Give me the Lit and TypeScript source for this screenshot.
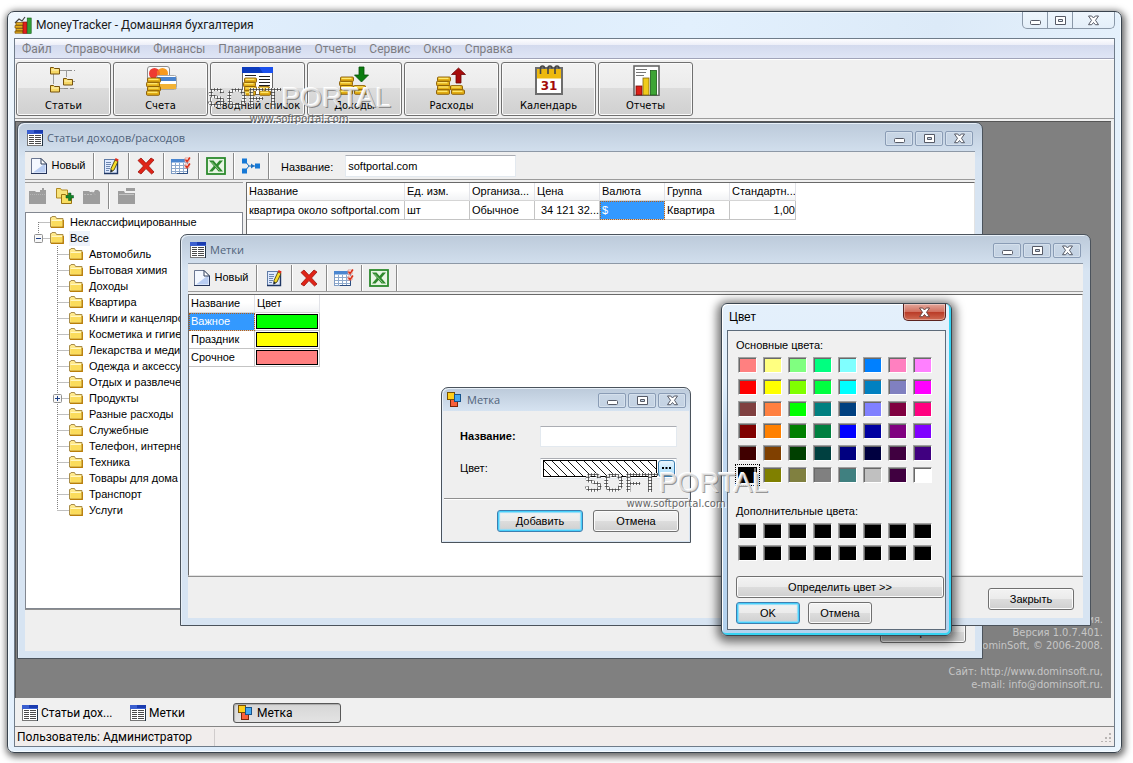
import { LitElement, html, svg, css, nothing, TemplateResult } from "lit";
import { customElement, property } from "lit/decorators.js";
import { styleMap } from "lit/directives/style-map.js";
import { classMap } from "lit/directives/class-map.js";

/* ---------- icons ---------- */

const icon = (w: number, h: number, body: unknown) =>
  html`<svg width=${w} height=${h} viewBox="0 0 ${w} ${h}" aria-hidden="true" style="display:block;flex:none">${body}</svg>`;

const coin = (x: number, y: number, w = 13) => svg`
  <rect x=${x + 0.5} y=${y} width=${w} height="4.4" rx="1" fill="#e2ad14" stroke="#855804" stroke-width=".9"/>
  <path d="M${x + 1.5} ${y + 1.4} h${w - 3}" stroke="#ffe970" stroke-width="1.3"/>`;

const coins = (x: number, y: number) => svg`
  ${coin(x + 1, y)}${coin(x, y + 4.3)}${coin(x + 1, y + 8.6)}${coin(x, y + 12.9)}
  ${coin(x + 14, y + 8.6, 12)}${coin(x + 15, y + 12.9, 13)}`;

const bigFolder = (x: number, y: number) => svg`
  <path d="M${x + 0.5} ${y + 0.5} h3 l1 1 h5 v5.500 h-9 z" fill="#f6d764" stroke="#77520c"/>
  <path d="M${x + 1.5} ${y + 3} h7" stroke="#fff6c0"/>`;

const icons = {
  app: () => icon(18, 18, svg`
    <path d="M1 7 L5 3 L8 5 L11 1" fill="none" stroke="#444" stroke-width="1.2"/>
    <path d="M2 6.5 h8 v2.6 h-8z M1 9.5 h8 v2.6 h-8z M2 12.5 h8 v2.4 h-8z M1 15 h8 v2.2 h-8z" fill="#e3ad1e" stroke="#7a5206" stroke-width=".7"/>
    <rect x="9" y="6" width="4" height="11.5" fill="#e0201c" stroke="#7c0a08" stroke-width=".6"/>
    <rect x="13.2" y="2" width="4" height="15.5" fill="#33a136" stroke="#125816" stroke-width=".6"/>`),
  articles: () => icon(32, 32, svg`
    <path d="M5.5 10 V20 M12 6.5 H20 M18.500 7 V13 M22 17.500 H27 M12 24.500 H16" fill="none" stroke="#9b9b9b"/>
    <path d="M20 6.5 H27 M16 24.500 H27" stroke="#8d8d8d" stroke-dasharray="4 2"/>
    ${bigFolder(2, 3)}${bigFolder(15, 14)}${bigFolder(2, 21)}`),
  accounts: () => icon(32, 32, svg`
    <rect x="2.5" y="2.5" width="22" height="15" rx="2.5" fill="#fafafa" stroke="#8c8c8c"/>
    <circle cx="9.5" cy="9.500" r="5.5" fill="#ee3b32"/><circle cx="17.5" cy="9.500" r="5.5" fill="#f89a1d"/>
    <path d="M13.5 5.8 a5.5 5.5 0 0 1 0 7.4 a5.5 5.5 0 0 1 0 -7.4" fill="#f26a2a"/>
    <rect x="11.5" y="11.500" width="20" height="14" rx="2" fill="#fff" stroke="#a9a9a9"/>
    <rect x="12" y="13" width="19" height="4" fill="#4a83cc"/><rect x="12" y="20" width="19" height="5" fill="#f2b234"/>
    ${coin(2, 14)}${coin(1, 18.3)}${coin(2, 22.6)}${coin(1, 26.9)}`),
  summary: () => icon(32, 32, svg`
    <rect x=".5" y="3.500" width="30" height="27" fill="#fff" stroke="#666"/>
    <rect x="0" y="3" width="31" height="6" fill="#0c3bbd"/><path d="M17 3 h14 v6 h-10z" fill="#1a50ee"/>
    <path d="M3 11.500 H14 M3 14.500 H12 M17 12.500 H28 M17 15.500 H28 M17 18.500 H28 M17 21.500 H28" stroke="#222"/>
    ${coin(2, 14, 12)}${coin(1, 18.3, 12)}${coin(2, 22.6, 12)}${coin(1, 26.9, 12)}${coin(16, 22.6, 11)}${coin(17, 26.9, 11)}`),
  income: () => icon(32, 32, svg`${coins(0, 13)}
    <path d="M20 3 h5 v8 h4.500 l-7 7 l-7 -7 h4.500z" fill="#0b7c10" stroke="#055208" stroke-width=".8"/>`),
  expense: () => icon(32, 32, svg`${coins(0, 13)}
    <path d="M20 19 v-8.500 h-4.500 l7 -6.500 l7 6.500 h-4.500 v8.500z" fill="#a80c0c" stroke="#6d0606" stroke-width=".8"/>`),
  calendar: () => icon(32, 32, svg`
    <rect x="3" y="4" width="26" height="26" fill="#fff" stroke="#6d6d6d" stroke-width="2"/>
    <rect x="4" y="5" width="24" height="9.500" fill="#edb90e"/>
    <text x="16" y="26" text-anchor="middle" font-family="DejaVu Sans, sans-serif" font-weight="700" font-size="12" fill="#a40a0a">31</text>
    <path d="M7.500 10 V4.500 q0-2.500 2-2.500 t2 2.500 M15 10 V4.500 q0-2.500 2-2.500 t2 2.500 M22 10 V4.500 q0-2.500 2-2.500 t2 2.500" fill="none" stroke="#454545" stroke-width="1.600"/>`),
  reports: () => icon(32, 32, svg`
    <rect x="4" y="2" width="25" height="29.500" fill="#fff" stroke="#666" stroke-width="1.600"/>
    <path d="M6 5.500 H17 M6 8.500 H16 M6 11.500 H14" stroke="#777"/>
    <rect x="6" y="22" width="6" height="9" fill="#dd1f16" stroke="#760d08" stroke-width=".8"/>
    <rect x="13" y="14" width="6" height="17" fill="#f0cb1a" stroke="#85670a" stroke-width=".8"/>
    <rect x="20.500" y="6.500" width="6" height="24.500" fill="#3ea535" stroke="#1c5e18" stroke-width=".8"/>`),
  list: () => icon(16, 16, svg`
    <path d="M0 0 h15 v15 h-15z" fill="#fff"/><path d="M.5 0 V15 M0 15.500 H15" stroke="#777"/><path d="M15.500 2 V16" fill="none" stroke="#234"/>
    <rect width="16" height="4" fill="#3a5fd0"/><path d="M7 0 h9 v3 h-9z" fill="#1a3cb0"/>
    <path d="M2 5.500 H7 M2 7.500 H7 M2 9.500 H7 M2 11.500 H7 M2 13.500 H7 M8 5.500 H14 M8 7.500 H14 M8 9.500 H14 M8 11.500 H14 M8 13.500 H14" stroke="#4a4a4a"/>`),
  tag: () => icon(16, 16, svg`
    <rect x="3.500" y="7.500" width="7" height="7" fill="#f9603a" stroke="#7b2507"/>
    <rect x=".5" y=".5" width="7" height="7" fill="#ffcf1a" stroke="#7a5300"/>
    <rect x="7.500" y="2.500" width="6" height="7" fill="#45a9ef" stroke="#17538c"/>`),
  create: () => icon(18, 18, svg`
    <path d="M1.500 1.500 H11 L16.500 7 V16.500 H1.500z" fill="#f4f8ff" stroke="#6a7691"/>
    <path d="M3 15.500 L15.500 6 V15.500z" fill="#b9cdf2"/><path d="M11 1.500 V7 H16.500z" fill="#fff" stroke="#33415c"/>
    <path d="M1 16.500 H17 M16.500 7 V17" stroke="#26355a"/>`),
  edit: () => icon(18, 18, svg`
    <rect x="2.500" y="2.500" width="13" height="14" fill="#dfeaff" stroke="#5f7ba6"/><path d="M2 16.500 H15.500 V5" fill="none" stroke="#1f3764" stroke-width="1.400"/>
    <path d="M4 5.500 H9 M4 7.500 H9 M4 9.500 H8 M4 11.500 H8 M4 13.500 H7" stroke="#6d87b0"/>
    <path d="M9 11.500 L13 3 L16 4.500 L12 13 L9 15z" fill="#f7dc28" stroke="#4c4412" stroke-width=".9"/>
    <path d="M12.800 3 l.8 -2 l3 1.500 l-.6 2z" fill="#e02d1c"/><path d="M8.700 12.500 l-.4 3.200 l2.700 -2z" fill="#1e2b3e"/>`),
  remove: () => icon(18, 18, svg`
    <path d="M1 3.500 L4 1 L9 6.300 L14 1 L17 3 L11.500 9 L17 15 L14.500 17 L9 11.600 L4 17 L1 15 L6.500 9z" fill="#e02418" stroke="#9c130b" stroke-width=".8"/>`),
  columns: () => icon(20, 18, svg`
    <rect x=".5" y="2.500" width="16" height="14" fill="#fff" stroke="#7f9cc4"/><rect x="0" y="2" width="17" height="3.500" fill="#4a86d0"/>
    <path d="M4.500 6 V17 M8.500 6 V17 M12.500 6 V17 M1 8.500 H16 M1 11.500 H16 M1 14.500 H16" stroke="#8ea9cc"/>
    <path d="M16.500 8 V16.500 H6" fill="none" stroke="#2c4d80"/>
    <path d="M14 1 h4 v4 h-4z M14 7 h4 v4 h-4z" fill="#fff" stroke="#d88c80" stroke-width=".8"/>
    <path d="M14.500 2.500 l1.500 2 l3 -4 M14.500 8.500 l1.500 2 l3 -4" fill="none" stroke="#dc2e16" stroke-width="1.500"/>`),
  excel: () => icon(20, 18, svg`
    <rect x="1" y="1" width="18" height="16" fill="#e8f5e4" stroke="#2c8a2d" stroke-width="1.800"/>
    <path d="M3 3.500 H7.500 L10.500 7 L13.500 3.500 H17 L12.300 9 L17 14.500 H12.500 L9.700 11 L6.500 14.500 H3 L7.800 9z" fill="#2f8a2d"/>
    <path d="M5.500 5 L13.500 13.500" stroke="#8fc98a"/>`),
  tree: () => icon(20, 18, svg`
    <path d="M4 4 L8 9 L4 14 M8 9 H16" fill="none" stroke="#1b6fbf"/><path d="M10 6.500 l3.500 2.500 l-3.500 2.500z" fill="#1b6fbf"/>
    <rect x="1" y="1.500" width="5" height="5" fill="#1779d6"/><rect x="1" y="11.500" width="5" height="5" fill="#1779d6"/>
    <rect x="14" y="6.500" width="5" height="5" fill="#1779d6"/>`),
  folderGrey: () => icon(18, 18, svg`<path d="M0 4 h6 l1 1 h4 v-2 h2 v-2 h2 v2 h2 v14 h-17z" fill="#9d9d9d"/><path d="M1 7.500 H16" stroke="#b4b4b4" stroke-dasharray="1 1"/>`),
  folderGreyOpen: () => icon(18, 18, svg`<path d="M0 4 h6 l1 1 h4 l1 -2 h3 l2 2 v12 h-17z" fill="#9d9d9d"/><path d="M9 4.500 l3 3 M1 7.500 H10" stroke="#bcbcbc" stroke-dasharray="2 1"/>`),
  folderGreyFlat: () => icon(18, 18, svg`<path d="M0 4 h6 l1 2 h10 v11 h-17z M8 1 h9 v3 h-9z" fill="#9d9d9d"/><path d="M1 7.500 H16" stroke="#c4c4c4"/>`),
  folderAdd: () => icon(18, 18, svg`
    <path d="M.5 1.500 h4 l1 1.500 h6 v8 h-11z" fill="#f8e37a" stroke="#b08a22"/>
    <path d="M5.500 7.500 h4 l1 1.500 h5 v7.500 h-10z" fill="#f8de62" stroke="#9a7412"/>
    <path d="M12.500 6 h2.500 v2.500 h2.500 v2.500 h-2.500 v2.500 h-2.500 v-2.500 h-2.500 v-2.500 h2.500z" fill="#13842a" stroke="#06501a" stroke-width=".5"/>`),
  folder: () => icon(14, 12, svg`
    <path d="M.5 11 V1.500 h1 l.5 -1 h3.500 l1 2 h6.500 V11z" fill="#ffe98c" stroke="#a98d4a"/>
    <path d="M1.500 4 H12.500 V10.500 H1.500z" fill="#fbdc5c"/><path d="M1.500 4.500 H12" stroke="#fff7c4"/>
    <path d="M1 11.300 H13.300 V4" fill="none" stroke="#b97e0a" stroke-width="1.300"/>`),
};

type IconName = keyof typeof icons;

/* ---------- shared look ---------- */

const controls = css`
  * { box-sizing: border-box; }
  button, input { font: inherit; color: inherit; margin: 0; }
  button { padding: 0; cursor: default; }
  .push {
    height: 22px;
    border: 1px solid #707070;
    border-radius: 3px;
    background: linear-gradient(#f3f3f3, #ebebeb 50%, #dddddd 50%, #cfcfcf);
    box-shadow: inset 0 0 0 1px #fbfbfb;
  }
  .push.default { border-color: #3c7fb1; box-shadow: inset 0 0 0 1px #48d0fb, inset 0 0 1px 2px #8fdcf8; }
`;

@customElement("caption-buttons")
class CaptionButtons extends LitElement {
  static styles = css`
    :host { display: flex; gap: 2px; }
    button {
      display: grid; place-items: center; padding: 0;
      width: 28px; height: 15px;
      border: 1px solid #8a9cb5; border-radius: 2px;
      background: linear-gradient(#c9d6e5, #c3d2e3);
      box-shadow: inset 0 0 0 1px #d5e0ec;
    }
    :host([main]) { gap: 0; }
    :host([main]) button {
      height: 17px; width: 26px; margin-left: -1px;
      border-color: #8a98a8; border-top: 0; border-radius: 0;
      background: linear-gradient(#eef6fd, #e4eff9); box-shadow: none;
    }
    :host([main]) button:first-child { border-bottom-left-radius: 5px; }
    :host([main]) button:last-child { width: 43px; border-bottom-right-radius: 5px; }
  `;
  render() {
    return html`
      <button aria-label="Свернуть">${icon(13, 11, svg`<rect x="1.500" y="5.500" width="10" height="4" rx="1" fill="#fff" stroke="#565a66"/>`)}</button>
      <button aria-label="Развернуть">${icon(13, 11, svg`<path d="M1.500 1.500 h10 v8 h-10z M4.500 4.500 h4 v2 h-4z" fill="#fff" fill-rule="evenodd" stroke="#565a66"/>`)}</button>
      <button aria-label="Закрыть">${icon(13, 11, svg`<path d="M1.500 1 H4.700 L6.500 3 L8.300 1 H11.500 L8.500 5.300 L11.500 9.700 H8.300 L6.500 7.500 L4.700 9.700 H1.500 L4.500 5.300z" fill="#fff" stroke="#565a66"/>`)}</button>`;
  }
}

@customElement("mdi-window")
class MdiWindow extends LitElement {
  @property() heading = "";
  @property() glyph: IconName = "list";

  static styles = css`
    * { box-sizing: border-box; }
    :host {
      box-sizing: border-box;
      display: flex; flex-direction: column;
      border: 1px solid #4b535c;
      border-radius: 7px 7px 0 0;
      background: linear-gradient(#bccada, #d7e4f2 36px);
      box-shadow: inset 1px 1px 0 #e8f0f8;
      padding: 0 7px 7px;
      overflow: hidden;
    }
    :host([compact]) { padding: 0 1px 1px; background: linear-gradient(#bccada, #d7e4f2 24px); }
    header {
      display: flex; align-items: center; flex: none;
      height: 28px; padding: 2px 2px 0 2px; gap: 4px;
      font: 11px/16px "Open Sans", "Noto Sans", sans-serif; color: #50637a;
    }
    :host([compact]) header { height: 23px; padding: 1px 3px 0 4px; }
    h2 { flex: 1; margin: 0; font: inherit; }
    .body { flex: 1; min-height: 0; display: flex; flex-direction: column; background: #efefef; border-top: 1px solid #8d98a6; }
    :host([compact]) .body { border-top: 0; }
  `;
  render() {
    return html`
      <header>${icons[this.glyph]()}<h2>${this.heading}</h2><caption-buttons></caption-buttons></header>
      <div class="body"><slot></slot></div>`;
  }
}

@customElement("color-dialog")
class ColorDialog extends LitElement {
  basic = (
    "ff8080 ffff80 80ff80 00ff80 80ffff 0080ff ff80c0 ff80ff " +
    "ff0000 ffff00 80ff00 00ff40 00ffff 0080c0 8080c0 ff00ff " +
    "804040 ff8040 00ff00 008080 004080 8080ff 800040 ff0080 " +
    "800000 ff8000 008000 008040 0000ff 0000a0 800080 8000ff " +
    "400000 804000 004000 004040 000080 000040 400040 400080 " +
    "000000 808000 808040 808080 408080 c0c0c0 400040 ffffff"
  ).split(" ");
  custom: string[] = Array(16).fill("000000");

  static styles = [controls, css`
    :host {
      box-sizing: border-box; display: flex; flex-direction: column;
      border: 1px solid #3c4650; border-radius: 6px;
      padding: 0 5px 5px 5px;
      background: linear-gradient(#e4f0fb, #e0eefb 80px, #c3daf2 130px, #b4d2ee);
      box-shadow: inset -1px -1px 0 1px #35d3f2, inset 1px 1px 0 #fff, 0 2px 10px 4px rgba(0, 0, 0, .55);
      font: 11px/13px "Liberation Sans", Arial, sans-serif; color: #000;
    }
    header { display: flex; justify-content: space-between; height: 26px; padding: 0 0 0 2px; }
    h2 { margin: 0; padding-top: 7px; font: 12px/13px "Liberation Sans", Arial, sans-serif; }
    .close {
      display: grid; place-items: center; width: 43px; height: 17px;
      border: 1px solid #5b2320; border-top: 0; border-radius: 0 0 5px 5px;
      background: linear-gradient(#e4a79b, #d1705f 48%, #b93a26 50%, #cf6a52);
      box-shadow: inset 0 0 0 1px rgba(255, 255, 255, .35);
    }
    .body { flex: 1; display: flex; flex-direction: column; border: 1px solid #5d6b7a; background: #f0f0f0; padding: 8px 1px 5px 8px; }
    h3 { margin: 0; font: inherit; }
    .grid { display: grid; grid-template-columns: repeat(8, 19px); gap: 6px; padding: 5px 0 0 2px; }
    .cell {
      width: 19px; height: 16px;
      border: 1px solid; border-color: #a0a0a0 #fff #fff #a0a0a0;
      box-shadow: inset 1px 1px 0 #696969;
    }
    .cell.on { border-color: #000; outline: 1px dotted #000; outline-offset: 2px; box-shadow: inset -2px 0 0 #777; }
    .second { padding-top: 22px; }
    .wide { margin-top: 15px; }
    .row { display: flex; gap: 8px; margin-top: 4px; }
    .row button { width: 64px; }
  `];

  cells(list: string[], selected = -1) {
    return html`<div class="grid">${list.map((c, i) => html`
      <button class=${classMap({ cell: true, on: i === selected })} aria-label="#${c}" style=${styleMap({ background: "#" + c })}></button>`)}</div>`;
  }

  render() {
    return html`
      <header>
        <h2>Цвет</h2>
        <button class="close" aria-label="Закрыть">${icon(13, 11, svg`<path d="M1.500 1 H4.700 L6.500 3 L8.300 1 H11.500 L8.500 5.300 L11.500 9.700 H8.300 L6.500 7.500 L4.700 9.700 H1.500 L4.500 5.300z" fill="#fff" stroke="#6a4440"/>`)}</button>
      </header>
      <div class="body">
        <h3>Основные цвета:</h3>
        ${this.cells(this.basic, 40)}
        <h3 class="second">Дополнительные цвета:</h3>
        ${this.cells(this.custom)}
        <button class="push wide">Определить цвет &gt;&gt;</button>
        <div class="row"><button class="push default">OK</button><button class="push">Отмена</button></div>
      </div>`;
  }
}

/* ---------- application ---------- */

@customElement("app-root")
class AppRoot extends LitElement {
  menu = ["Файл", "Справочники", "Финансы", "Планирование", "Отчеты", "Сервис", "Окно", "Справка"];

  tools: [IconName, string][] = [
    ["articles", "Статьи"], ["accounts", "Счета"], ["summary", "Сводный список"], ["income", "Доходы"],
    ["expense", "Расходы"], ["calendar", "Календарь"], ["reports", "Отчеты"],
  ];

  groups = [
    "Автомобиль", "Бытовая химия", "Доходы", "Квартира", "Книги и канцелярские товары", "Косметика и гигиена",
    "Лекарства и медицина", "Одежда и аксессуары", "Отдых и развлечения", "Продукты", "Разные расходы",
    "Служебные", "Телефон, интернет", "Техника", "Товары для дома", "Транспорт", "Услуги",
  ];

  columns: [string, number][] = [
    ["Название", 158], ["Ед. изм.", 65], ["Организа...", 65], ["Цена", 65], ["Валюта", 65], ["Группа", 65], ["Стандартн...", 66],
  ];

  labels: [string, string][] = [["Важное", "#00ff00"], ["Праздник", "#ffff00"], ["Срочное", "#ff8080"]];

  static styles = [controls, css`
    :host {
      position: relative;
      display: flex;
      min-height: 100vh;
      box-sizing: border-box;
      padding: 11px 11px 10px 7px;
      background: #fff;
      --sans: "Liberation Sans", Arial, sans-serif;
      --ui: Roboto, "Noto Sans", sans-serif;
      font: 11px/13px var(--sans);
      color: #000;
      overflow: hidden;
    }
    h1, ul, p { margin: 0; padding: 0; list-style: none; }

    .main {
      flex: 1; min-width: 0; display: flex; flex-direction: column;
      border: 1px solid #39434d; border-radius: 7px; padding: 0 6px 5px;
      background: linear-gradient(100deg, #eef6fd, #e3f0fd 12%, #dcebfa 30%, #e2f0fd 55%, #dceaf8 75%, #eaf5fe);
      box-shadow: inset 0 0 0 1px #f5fbff, 1px 2px 7px 2px rgba(0, 0, 0, .6);
    }
    .title { display: flex; gap: 4px; height: 26px; }
    .title svg { margin-top: 4px; }
    .title h1 { flex: 1; padding-top: 5px; font: 12px/17px var(--ui); color: #1a1a1a; }
    .client { flex: 1; display: flex; flex-direction: column; border: 1px solid #6f7c8a; background: #f0f0f0; }

    .menu { display: flex; gap: 13px; height: 20px; padding: 0 7px; border-bottom: 1px solid #a0a3b8; background: linear-gradient(#fdfdff, #edeff8 30%, #d3daee 32%, #dfe5f5); }
    .menu button { border: 0; background: none; font: 12px/18px var(--ui); color: #7d7d82; }
    .tools { display: flex; gap: 2px; padding: 2px 1px 3px; border-top: 1px solid #fff; border-bottom: 1px solid #9b9b9b; height: 60px; }
    .tools button {
      display: flex; flex-direction: column; align-items: center; gap: 3px; padding-top: 1px;
      width: 95px; height: 54px;
      border: 1px solid #707070; border-radius: 3px;
      background: linear-gradient(#f2f2f2, #ebebeb 48%, #dcdcdc 49%, #d0d0d0);
      box-shadow: inset 0 0 0 1px #fafafa;
      font: 11px/13px "DejaVu Sans Condensed", Verdana, sans-serif; white-space: nowrap;
    }

    .desk { position: relative; flex: 1; margin: 2px 3px 0 0; border: 1px solid #565656; border-width: 1px 0 0 1px; background: #808080; overflow: hidden; }
    .credits { position: absolute; right: 8px; bottom: 7px; text-align: right; color: #c6c6c6; font: 11px/13px "DejaVu Sans Condensed", sans-serif; }
    .credits .gap { padding-top: 13px; }
    .w-items { position: absolute; left: 1px; top: 0; width: 966px; height: 537px; }
    .w-tags { position: absolute; left: 164px; top: 112px; width: 911px; height: 392px; }
    .w-tag { position: absolute; left: 425px; top: 265px; width: 250px; height: 156px; }
    .w-color { position: absolute; left: 705px; top: 181px; width: 231px; height: 333px; }

    .bar { display: flex; align-items: center; height: 28px; border-bottom: 1px solid #9b9b9b; }
    .bar button { display: flex; align-items: center; justify-content: center; width: 33px; height: 26px; padding-right: 2px; border: 0; background: none; }
    .bar .new { width: 68px; gap: 4px; padding-right: 3px; }
    .sep { width: 2px; height: 26px; border-left: 1px solid #8a8a8a; border-right: 1px solid #fff; }
    .bar label { padding: 3px 12px 0 11px; }
    .bar input { width: 171px; height: 22px; }
    .text { border: 1px solid #e3e9ef; border-top-color: #abadb3; background: #fff; padding: 0 2px; outline: 0; }

    .split { flex: 1; display: flex; gap: 3px; min-height: 0; padding-top: 2px; }
    .left { width: 218px; display: flex; flex-direction: column; border-top: 1px solid #9b9b9b; }
    .left .bar { height: 29px; border: 0; padding: 0 0 3px 4px; }
    .left .bar button { width: 27px; justify-content: flex-start; }
    .left .sep { margin: 0 8px 0 -2px; }
    .tree { flex: 1; border: 1px solid #828790; background: #fff; padding-top: 1px; overflow: hidden; white-space: nowrap; }
    .tree li { display: flex; align-items: center; height: 16px; padding-left: 6px; }
    .tree li.sub { padding-left: 24px; }
    .tree li span { margin-left: 5px; padding: 0 1px; line-height: 15px; }
    .tree .cur { background: #eef2fa; }
    .sheet { flex: 1; min-width: 0; border: 1px solid; border-color: #696969 #e3e3e3 #e3e3e3 #696969; background: #fff; }
    .foot { display: flex; justify-content: flex-end; align-items: center; height: 42px; padding: 3px 9px 0 0; border-top: 1px solid #8f8f8f; }
    .foot .push { width: 86px; }

    table { border-collapse: separate; border-spacing: 0; table-layout: fixed; }
    th { height: 18px; padding: 0 2px; font-weight: 400; text-align: left; white-space: nowrap; overflow: hidden; border-right: 1px solid #e2e3e8; border-bottom: 1px solid #d5d5d5; background: linear-gradient(#fff 45%, #f2f3f5); }
    td { height: 19px; padding: 0 2px; white-space: nowrap; overflow: hidden; border-right: 1px solid #c4c4c4; border-bottom: 1px solid #c4c4c4; }
    .tags td { height: 18px; }
    .num { text-align: right; padding: 0; }
    td.sel { color: #fff; background: #3399ff; outline: 1px dotted #b35f1a; outline-offset: -1px; }
    td.chip { padding: 1px; }
    .chip div { height: 15px; border: 1px solid #000; }

    .form { flex: 1; display: grid; grid-template-columns: 80px 137px; grid-auto-rows: 21px; row-gap: 11px; align-content: start; align-items: center; padding: 15px 0 0 17px; }
    .form .strong { font-weight: 700; }
    .form input { width: 100%; height: 21px; }
    .pick { display: flex; gap: 1px; height: 21px; padding: 1px 1px 1px 2px; border: 1px solid #e3e9ef; border-top-color: #abadb3; background: #fff; }
    .hatch { flex: 1; height: 17px; border: 1px solid #000; background: #fff; }
    .hatch svg { width: 100%; height: 100%; display: block; }
    .more { width: 17px; height: 17px; display: grid; place-items: center; border: 1px solid #3c7fb1; border-radius: 3px; background: linear-gradient(#eaf6fd, #bee6fd 60%, #a7d9f5); }
    .actions { display: flex; justify-content: flex-end; gap: 10px; height: 43px; padding: 11px 9px 0; margin: 0 1px; border-top: 1px solid #8f8f8f; box-shadow: inset 0 1px 0 #fff; }
    .actions .push { width: 86px; }

    .tasks { display: flex; height: 28px; padding: 5px 2px 3px; font: 12px/14px var(--ui); }
    .tasks button { display: flex; align-items: center; gap: 3px; width: 108px; height: 20px; padding-left: 4px; border: 1px solid transparent; background: none; border-radius: 3px; }
    .tasks .on { border-color: #585858; background: linear-gradient(#d6d6d6, #e3e3e3); box-shadow: inset 1px 1px 1px #aaa; }
    .status { display: flex; align-items: center; justify-content: space-between; height: 20px; padding: 1px 3px 0 2px; border-top: 1px solid #858585; background: #f1edec; font: 12px/17px var(--ui); }
    .status p { width: 198px; border-right: 1px solid #d0cccc; }

    .mark { position: absolute; display: grid; justify-items: center; pointer-events: none; font: 28px/26px var(--sans); }
    .mark.a { left: 207px; top: 85px; }
    .mark.b { left: 584px; top: 470px; }
    .mark .soft { font-weight: 700; color: transparent; background: radial-gradient(circle, #444 45%, rgba(255, 255, 255, .8) 55%) 0 0 / 3px 3px; -webkit-background-clip: text; background-clip: text; }
    .mark .portal { color: rgba(235, 235, 235, .8); text-shadow: 1px 1px 0 rgba(90, 90, 90, .6), -1px -1px 0 #fff; }
    .mark small { font: 10px/15px "DejaVu Sans", sans-serif; color: #666; text-shadow: 1px 1px 0 #fff; }
  `];

  guide(level: number, first: boolean, last: boolean, box?: "+" | "-") {
    const x = level ? 7.5 : 6.5;
    const w = level ? 19 : 18;
    return icon(w, 16, svg`
      <path d="M${x} ${first ? 8 : 0} V${last ? 8 : 16} M${x} 8.500 H${w}" fill="none" stroke="#808080" stroke-dasharray="1 1"/>
      ${box ? svg`<rect x=${x - 4} y="4.500" width="8" height="8" rx="1" fill="#f8f8f8" stroke="#919191"/>
        <path d="M${x - 2.5} 8.500 h5 ${box === "+" ? `M${x} 6 v5` : ""}" stroke="#1c3f86"/>` : nothing}`);
  }

  toolbar(extra: TemplateResult | typeof nothing = nothing) {
    const names: [IconName, string][] = [["edit", "Изменить"], ["remove", "Удалить"], ["columns", "Столбцы"], ["excel", "Экспорт"]];
    return html`<div class="bar">
      <button class="new">${icons.create()}<span>Новый</span></button><i class="sep"></i>
      ${names.map(([n, t]) => html`<button aria-label=${t}>${icons[n]()}</button><i class="sep"></i>`)}
      ${extra}
    </div>`;
  }

  itemsWindow() {
    return html`<mdi-window class="w-items" heading="Статьи доходов/расходов" glyph="list">
      ${this.toolbar(html`
        <button aria-label="Группы">${icons.tree()}</button><i class="sep"></i>
        <label for="filter">Название:</label><input id="filter" class="text" .value=${"softportal.com"}>`)}
      <div class="split">
        <div class="left">
          <div class="bar">
            <button aria-label="Добавить">${icons.folderGrey()}</button>
            <button aria-label="Добавить группу">${icons.folderAdd()}</button>
            <button aria-label="Изменить группу">${icons.folderGreyOpen()}</button><i class="sep"></i>
            <button aria-label="Удалить группу">${icons.folderGreyFlat()}</button>
          </div>
          <ul class="tree">
            <li>${this.guide(0, true, false)}${icons.folder()}<span>Неклассифицированные</span></li>
            <li>${this.guide(0, false, true, "-")}${icons.folder()}<span class="cur">Все</span></li>
            ${this.groups.map((g, i) => html`<li class="sub">${this.guide(1, false, i === this.groups.length - 1, g === "Продукты" ? "+" : undefined)}${icons.folder()}<span>${g}</span></li>`)}
          </ul>
        </div>
        <div class="sheet">
          <table style=${styleMap({ width: this.columns.reduce((s, [, w]) => s + w, 0) + "px" })}>
            <colgroup>${this.columns.map(([, w]) => html`<col style=${styleMap({ width: w + "px" })}>`)}</colgroup>
            <thead><tr>${this.columns.map(([c]) => html`<th>${c}</th>`)}</tr></thead>
            <tbody><tr>
              <td>квартира около softportal.com</td><td>шт</td><td>Обычное</td><td class="num">34 121 32...</td>
              <td class="sel">$</td><td>Квартира</td><td class="num">1,00</td>
            </tr></tbody>
          </table>
        </div>
      </div>
      <div class="foot"><button class="push">Закрыть</button></div>
    </mdi-window>`;
  }

  tagsWindow() {
    return html`<mdi-window class="w-tags" heading="Метки" glyph="list">
      ${this.toolbar()}
      <div class="split">
        <div class="sheet">
          <table class="tags" style=${styleMap({ width: "131px" })}>
            <colgroup><col style=${styleMap({ width: "66px" })}><col style=${styleMap({ width: "65px" })}></colgroup>
            <thead><tr><th>Название</th><th>Цвет</th></tr></thead>
            <tbody>${this.labels.map(([n, c], i) => html`<tr>
              <td class=${i ? "" : "sel"}>${n}</td><td class="chip"><div style=${styleMap({ background: c })}></div></td></tr>`)}</tbody>
          </table>
        </div>
      </div>
      <div class="foot"><button class="push">Закрыть</button></div>
    </mdi-window>`;
  }

  tagDialog() {
    return html`<mdi-window compact class="w-tag" heading="Метка" glyph="tag">
      <div class="form">
        <label class="strong" for="name">Название:</label><input id="name" class="text">
        <label for="color">Цвет:</label>
        <div class="pick">
          <div class="hatch"><svg aria-hidden="true"><defs><pattern id="h" width="8" height="8" patternUnits="userSpaceOnUse"><path d="M-1 -1 L9 9 M7 -1 L9 1 M-1 7 L1 9" stroke="#000" stroke-width=".9"/></pattern></defs><rect width="100%" height="100%" fill="url(#h)"/></svg></div>
          <button id="color" class="more">${icon(9, 3, svg`<path d="M0 0 h2 v2 h-2z M3.500 0 h2 v2 h-2z M7 0 h2 v2 h-2z" fill="#000"/>`)}</button>
        </div>
      </div>
      <div class="actions"><button class="push default">Добавить</button><button class="push">Отмена</button></div>
    </mdi-window>`;
  }

  mark(place: string) {
    return html`<div class="mark ${place}"><div><span class="soft">SOFT</span><span class="portal">PORTAL</span></div><small>www.softportal.com</small></div>`;
  }

  render() {
    return html`
      <div class="main">
        <header class="title">${icons.app()}<h1>MoneyTracker - Домашняя бухгалтерия</h1><caption-buttons main></caption-buttons></header>
        <div class="client">
          <nav class="menu">${this.menu.map((m) => html`<button>${m}</button>`)}</nav>
          <div class="tools">${this.tools.map(([i, t]) => html`<button>${icons[i]()}<span>${t}</span></button>`)}</div>
          <main class="desk">
            <div class="credits">
              <p>Все права защищены. Домашняя бухгалтерия.</p><p>Версия 1.0.7.401.</p><p>DominSoft, © 2006-2008.</p>
              <p class="gap">Сайт: http://www.dominsoft.ru,</p><p>e-mail: info@dominsoft.ru.</p>
            </div>
            ${this.itemsWindow()}${this.tagsWindow()}${this.tagDialog()}
            <color-dialog class="w-color"></color-dialog>
          </main>
          <nav class="tasks">
            <button>${icons.list()}<span>Статьи дох...</span></button>
            <button>${icons.list()}<span>Метки</span></button>
            <button class="on">${icons.tag()}<span>Метка</span></button>
          </nav>
          <footer class="status"><p>Пользователь: Администратор</p>
            ${icon(10, 10, svg`<path d="M8 1h2v2h-2z M4 5h2v2h-2z M8 5h2v2h-2z M0 9h2v1h-2z M4 9h2v1h-2z M8 9h2v1h-2z" fill="#b9b5b4"/>`)}
          </footer>
        </div>
      </div>
      ${this.mark("a")}${this.mark("b")}`;
  }
}
